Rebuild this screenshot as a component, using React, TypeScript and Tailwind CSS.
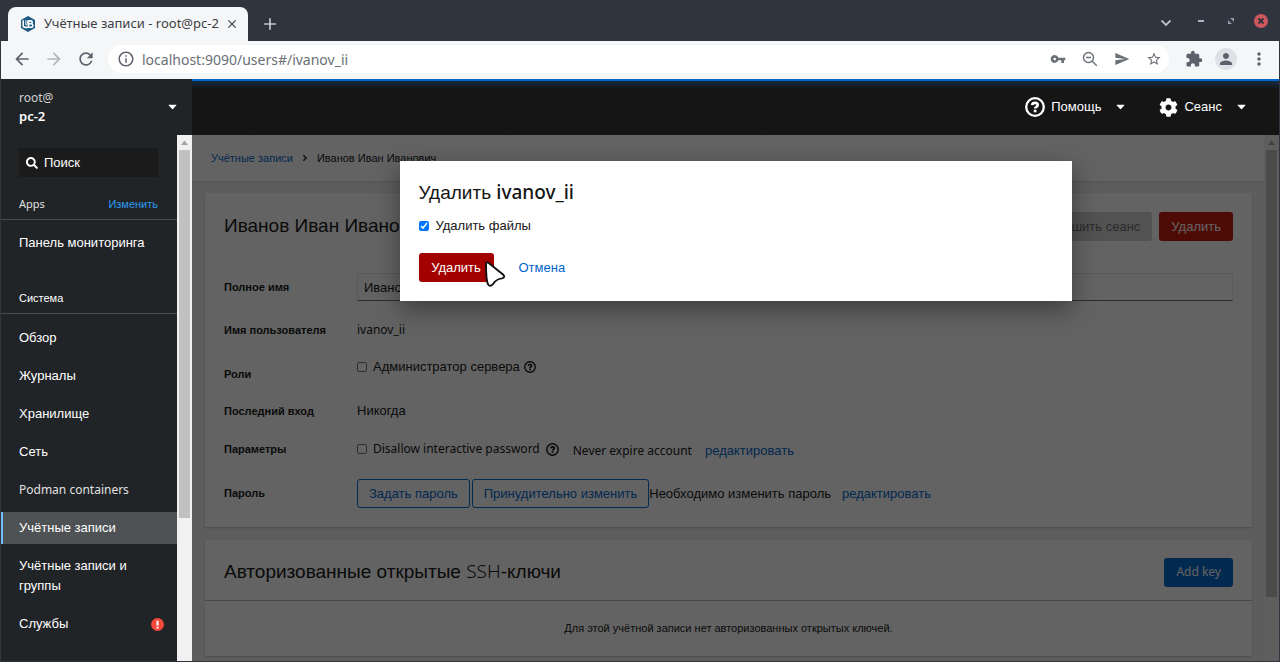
import React from "react";
import {
  MdArrowBack,
  MdArrowForward,
  MdRefresh,
  MdInfoOutline,
  MdVpnKey,
  MdSend,
  MdStarBorder,
  MdExtension,
  MdPerson,
  MdMoreVert,
  MdClose,
  MdAdd,
} from "react-icons/md";
import { FaSearch, FaCog, FaAngleRight } from "react-icons/fa";

const latin = "font-['Noto_Sans','Liberation_Sans',sans-serif]";

function HelpIcon({ className }: { className?: string }) {
  return (
    <svg viewBox="0 0 20 20" fill="none" stroke="currentColor" className={className} aria-hidden="true">
      <circle cx="10" cy="10" r="8.8" strokeWidth="2.3" />
      <path d="M7.100 8.200C7.300 6.600 8.400 5.900 10 5.900c1.700 0 2.800.8 2.800 2.200 0 1.800-2.700 1.900-2.700 3.500" strokeWidth="2.600" />
      <path d="M10.100 12.700v2.600" strokeWidth="2.700" />
    </svg>
  );
}

function Caret() {
  return (
    <svg viewBox="0 0 10 6" className="h-1.5 w-[9px]" fill="currentColor" aria-hidden="true">
      <path d="M1 .5h8q.8 0 .3.600L5.500 5.200q-.5.500-1 0L.7 1.100Q.2.500 1 .5z" />
    </svg>
  );
}

function Logo() {
  return (
    <svg viewBox="0 0 16 16" className="size-4 shrink-0" aria-hidden="true">
      <path d="M8 0 15 4v8l-7 4-7-4V4z" fill="#1b5a86" />
      <path
        d="M3.200 4.300v5.200c0 1.300 1 1.900 2.300 1.900h2.300M8.600 4.900h2.200c1.900 0 1.900 2.900 0 2.900H8.600h2.500c2.300 0 2.300 3.500 0 3.500H8.600V4.300"
        fill="none"
        stroke="#fff"
        strokeWidth="1.600"
      />
      <path d="M5.800 4.200v4.600h1.500V4.200" fill="none" stroke="#fff" strokeWidth=".9" />
    </svg>
  );
}

function BrowserChrome() {
  return (
    <div className="shrink-0 font-['Noto_Sans',sans-serif]">
      <div className="flex h-[41px] items-end bg-[#2f343f] pl-[7px]">
        <div className="flex h-[34px] w-60 items-center rounded-t-lg bg-[#f5f6f7] pr-2 pl-3 text-[13px] text-[#3c4043]">
          <Logo />
          <span className="ml-2 flex-1 whitespace-nowrap">Учётные записи - root@pc-2</span>
          <button aria-label="Закрыть вкладку" className="flex size-4 items-center justify-center">
            <MdClose className="size-3.5" />
          </button>
        </div>
        <button aria-label="Новая вкладка" className="ml-3 flex h-[34px] items-center text-[#c3c8d0]">
          <MdAdd className="size-5" />
        </button>
        <div className="ml-auto flex h-[41px] items-center pr-[11px] text-[#b9bfc9]">
          <button aria-label="Поиск вкладок" className="mt-1">
            <svg viewBox="0 0 12 12" className="size-3" fill="none" stroke="currentColor" strokeWidth="1.800">
              <path d="m1.500 3.500 4.500 4.500 4.500-4.500" />
            </svg>
          </button>
          <button aria-label="Свернуть" className="ml-[21px] flex w-4 justify-center">
            <span className="h-0.5 w-1.5 bg-[#aeb4bf]" />
          </button>
          <button aria-label="Восстановить" className="ml-4 flex w-3 justify-center">
            <svg viewBox="0 0 8 8" className="size-2" fill="#9298a4">
              <path d="M3 1h4v4zM1 3l4 4H1z" />
            </svg>
          </button>
          <button aria-label="Закрыть" className="ml-[17px]">
            <svg viewBox="0 0 14 14" className="size-3.5" aria-hidden="true">
              <circle cx="7" cy="7" r="7" fill="#cc575d" />
              <path d="m4.500 4.500 5 5m0-5-5 5" stroke="#2f343f" strokeWidth="1.800" />
            </svg>
          </button>
        </div>
      </div>
      <div className="flex h-[38px] items-center bg-[#f5f6f7] pr-2.5 pb-0.5 pl-[11px] text-[#5c616c]">
        <button aria-label="Назад"><MdArrowBack className="size-5" /></button>
        <button aria-label="Вперёд" className="ml-3 text-[#b3b5b9]"><MdArrowForward className="size-5" /></button>
        <button aria-label="Обновить" className="ml-3"><MdRefresh className="size-5" /></button>
        <div className="ml-3 flex h-7 flex-1 items-center rounded-full bg-white pr-[7px] pl-[9px]">
          <MdInfoOutline className="size-[18px]" />
          <input
            aria-label="Адрес"
            defaultValue="localhost:9090/users#/ivanov_ii"
            className="ml-[7px] min-w-0 flex-1 bg-transparent text-[14px] text-[#6b6f76] outline-none"
          />
          <div className="flex items-center gap-4 text-[#6b6f76]">
            <MdVpnKey className="size-4" />
            <svg viewBox="0 0 16 16" className="size-4" fill="none" stroke="currentColor" strokeWidth="1.400" aria-hidden="true">
              <circle cx="6.500" cy="6.500" r="5" />
              <path d="m10.200 10.200 4.600 4.600M4 6.500h5" />
            </svg>
            <MdSend className="size-4" />
            <MdStarBorder className="size-4" />
          </div>
        </div>
        <button aria-label="Расширения" className="ml-4"><MdExtension className="size-[18px]" /></button>
        <button aria-label="Профиль" className="ml-3 flex size-[22px] items-center justify-center rounded-full bg-[#dee1e6]">
          <MdPerson className="size-[18px]" />
        </button>
        <button aria-label="Меню" className="ml-3"><MdMoreVert className="size-5" /></button>
      </div>
    </div>
  );
}

function Scrollbar({ thumb }: { thumb: string }) {
  return (
    <div className="flex w-[15px] shrink-0 flex-col bg-[#f1f1f1]" aria-hidden="true">
      <svg viewBox="0 0 15 15" className="size-[15px] shrink-0" fill="#a3a3a3">
        <path d="M7.500 5.500 11 10H4z" />
      </svg>
      <div className={`mx-0.5 bg-[#c1c1c1] ${thumb}`} />
    </div>
  );
}

const systemItems = [
  { label: "Обзор" },
  { label: "Журналы" },
  { label: "Хранилище" },
  { label: "Сеть" },
  { label: "Podman containers", latin: true },
  { label: "Учётные записи", active: true },
  { label: "Учётные записи и группы" },
  { label: "Службы", alert: true },
];

function Sidebar() {
  return (
    <aside className="flex w-[191px] shrink-0 flex-col bg-[#212427] text-white">
      <button className={`flex h-14 shrink-0 items-center justify-between pr-[15px] pl-[18px] text-left ${latin}`}>
        <span>
          <span className="block text-[12px] leading-[18px] text-[#d2d2d2]">root@</span>
          <span className="block text-[13px] leading-[18px] font-semibold">pc-2</span>
        </span>
        <Caret />
      </button>
      <div className="flex min-h-0 flex-1">
        <nav className="min-w-0 flex-1 overflow-hidden pt-[13px] text-[13px]">
          <label className="mr-[19px] ml-[18px] flex h-[29px] items-center gap-1.5 bg-[#1b1b1b] pl-[7px]">
            <FaSearch className="size-3 shrink-0" />
            <input placeholder="Поиск" aria-label="Поиск" className="min-w-0 flex-1 bg-transparent outline-none placeholder:text-white" />
          </label>
          <div className="mt-[13px] flex h-[30px] items-center justify-between border-b border-[#4a4d50] pr-[19px] pl-[18px] text-[11px]">
            <h2 className={`text-[#e0e0e0] ${latin}`}>Apps</h2>
            <a href="#apps" className="text-[#2b9af3]">Изменить</a>
          </div>
          <a href="#dashboard" className="mt-[7px] flex h-8 items-center pl-[18px]">Панель мониторинга</a>
          <h2 className="mt-[25px] flex h-[30px] items-center border-b border-[#4a4d50] pl-[18px] text-[11px]">Система</h2>
          <ul className="mt-2 flex flex-col gap-1.5">
            {systemItems.map((item) => (
              <li key={item.label}>
                <a
                  href={`#${item.label}`}
                  className={`flex items-center justify-between border-l-2 py-1.5 pr-[13px] pl-4 leading-5 ${
                    item.active ? "border-[#73bcf7] bg-[#4f5255]" : "border-transparent"
                  } ${item.latin ? `${latin} text-[12px] text-[#e0e0e0]` : ""}`}
                >
                  {item.label}
                  {item.alert && (
                    <svg viewBox="0 0 14 14" className="size-[13px]" aria-label="Ошибка">
                      <circle cx="7" cy="7" r="7" fill="#f4483d" />
                      <path d="M7 3v5M7 9.400v1.900" stroke="#fff" strokeWidth="2.200" />
                    </svg>
                  )}
                </a>
              </li>
            ))}
          </ul>
        </nav>
        <Scrollbar thumb="h-[70%]" />
      </div>
    </aside>
  );
}

function Row({ id, label, className, children }: { id?: string; label: string; className: string; children: React.ReactNode }) {
  return (
    <div className={`flex items-center ${className}`}>
      <label htmlFor={id} className="w-[133px] shrink-0 text-[11px] font-bold">{label}</label>
      <div className="flex min-w-0 flex-1 items-center whitespace-nowrap">{children}</div>
    </div>
  );
}

const box = "size-[10px] shrink-0 appearance-none rounded-xs border border-[#767676] bg-white";
const outlined = "h-[29px] rounded-[3px] border border-[#06c] px-[11px] text-[#06c]";

function AccountPage() {
  return (
    <div className="flex h-full">
      <main className="min-w-0 flex-1 overflow-hidden bg-[#f0f0f0]">
        <nav aria-label="Навигация" className="flex h-[46px] items-center bg-white pl-[19px] text-[11px] shadow-sm">
          <a href="#users" className="text-[#06c]">Учётные записи</a>
          <FaAngleRight className="mx-[7px] size-2.5 text-[#333]" />
          <span>Иванов Иван Иванович</span>
        </nav>
        <section className="mr-3 ml-[13px] mt-3 bg-white p-[19px] shadow-[0_1px_2px_rgba(3,3,3,0.2)]">
          <div className="flex h-[29px] items-center gap-[7px]">
            <h1 className="flex-1 text-[19px]">Иванов Иван Иванович</h1>
            <button disabled className="h-[29px] rounded-[3px] bg-[#d2d2d2] px-3 text-[#6a6e73]">Завершить сеанс</button>
            <button className="h-[29px] rounded-[3px] bg-[#c9190b] px-3 text-white">Удалить</button>
          </div>
          <Row id="full-name" label="Полное имя" className="mt-8">
            <input
              id="full-name"
              defaultValue="Иванов Иван Иванович"
              className="h-7 w-full border border-[#e8e8e8] border-b-[#6a6e73] px-1.5 outline-none"
            />
          </Row>
          <Row label="Имя пользователя" className="mt-[17px] h-6">
            <span className={`text-[12px] ${latin}`}>ivanov_ii</span>
          </Row>
          <Row id="role-admin" label="Роли" className="mt-5 h-6">
            <div className="flex items-center pb-3.5">
              <input id="role-admin" type="checkbox" className={box} />
              <label htmlFor="role-admin" className="ml-1.5">Администратор сервера</label>
              <HelpIcon className="ml-1 size-3" />
            </div>
          </Row>
          <Row label="Последний вход" className="mt-[13px] h-6">Никогда</Row>
          <Row id="no-password" label="Параметры" className="mt-3.5 h-6">
            <input id="no-password" type="checkbox" className={box} />
            <label htmlFor="no-password" className={`ml-1.5 text-[12px] ${latin}`}>Disallow interactive password</label>
            <HelpIcon className="ml-1.5 size-[13px]" />
            <span className={`mt-1 ml-3.5 text-[12px] ${latin}`}>Never expire account</span>
            <a href="#expire" className="mt-1 ml-[13px] text-[#06c]">редактировать</a>
          </Row>
          <Row label="Пароль" className="mt-[18px]">
            <button className={outlined}>Задать пароль</button>
            <button className={`ml-0.5 ${outlined}`}>Принудительно изменить</button>
            <span>Необходимо изменить пароль</span>
            <a href="#password" className="ml-[11px] text-[#06c]">редактировать</a>
          </Row>
        </section>
        <section className="mr-3 ml-[13px] mt-[13px] bg-white shadow-[0_1px_2px_rgba(3,3,3,0.2)]">
          <div className="flex h-[61px] items-center justify-between border-b border-[#b8bbbe] px-[19px] pt-1">
            <h2 className="text-[19px]">Авторизованные открытые <span className={`font-light ${latin}`}>SSH</span>-ключи</h2>
            <button className={`h-[29px] rounded-[3px] bg-[#06c] px-3 text-[12px] text-white ${latin}`}>Add key</button>
          </div>
          <p className="flex h-[55px] items-center justify-center text-[11px]">
            Для этой учётной записи нет авторизованных открытых ключей.
          </p>
        </section>
      </main>
      <Scrollbar thumb="h-[85%]" />
    </div>
  );
}

function DeleteDialog() {
  return (
    <div className="absolute inset-0 flex items-start justify-center bg-[#030303]/62 pt-[26px]">
      <div
        role="dialog"
        aria-modal="true"
        aria-labelledby="dialog-title"
        className="w-[672px] max-w-full bg-white px-[19px] pt-[17px] pb-[19px] shadow-[0_8px_24px_rgba(3,3,3,0.4)]"
      >
        <h1 id="dialog-title" className="text-[19px] leading-7">
          Удалить <span className={`font-medium ${latin}`}>ivanov_ii</span>
        </h1>
        <label className="mt-[9px] flex h-5 items-center gap-[7px]">
          <input type="checkbox" defaultChecked className="size-[10px] accent-[#0075ff]" />
          Удалить файлы
        </label>
        <div className="mt-[17px] flex items-center">
          <div className="relative">
            <button className="h-[29px] w-[75px] rounded-[3px] bg-[#a30000] text-white">Удалить</button>
            <svg viewBox="0 0 22 28" className="absolute top-[7px] left-[65px] h-7 w-[22px]" aria-hidden="true">
              <path
                d="M2 4.500C2 2.300 3.600 1.800 5 3.200L19 14.500c2 1.800 1.300 3.400-1 3.900-4.500.6-6.300 1.600-9 5.600-1.500 2.200-4.200 2.500-5 .3C2 20 2 12 2 4.500z"
                fill="#fff"
                stroke="#111"
                strokeWidth="1.900"
                strokeLinejoin="round"
              />
            </svg>
          </div>
          <button className="ml-[25px] text-[#06c]">Отмена</button>
        </div>
      </div>
    </div>
  );
}

export default function App() {
  return (
    <div className="flex h-screen flex-col bg-[#2f343f] font-['Liberation_Sans',sans-serif] text-[13px] text-[#151515]">
      <div className="flex min-h-0 flex-1 flex-col px-px pb-px">
        <BrowserChrome />
        <div className="flex min-h-0 flex-1">
          <Sidebar />
          <div className="flex min-w-0 flex-1 flex-col">
            <header className="flex h-14 shrink-0 items-center justify-end gap-[34px] border-t-2 border-[#06c] bg-[#151515] bg-linear-to-b from-[#152a45] to-[#151515] to-15% pr-[33px] pb-0.5 text-white">
              <button className="flex items-center">
                <HelpIcon className="size-5" />
                <span className="mr-[15px] ml-1.5">Помощь</span>
                <Caret />
              </button>
              <button className="flex items-center">
                <FaCog className="size-[19px]" />
                <span className="mr-[15px] ml-1.5">Сеанс</span>
                <Caret />
              </button>
            </header>
            <div className="relative min-h-0 flex-1 overflow-hidden">
              <AccountPage />
              <DeleteDialog />
            </div>
          </div>
        </div>
      </div>
    </div>
  );
}
